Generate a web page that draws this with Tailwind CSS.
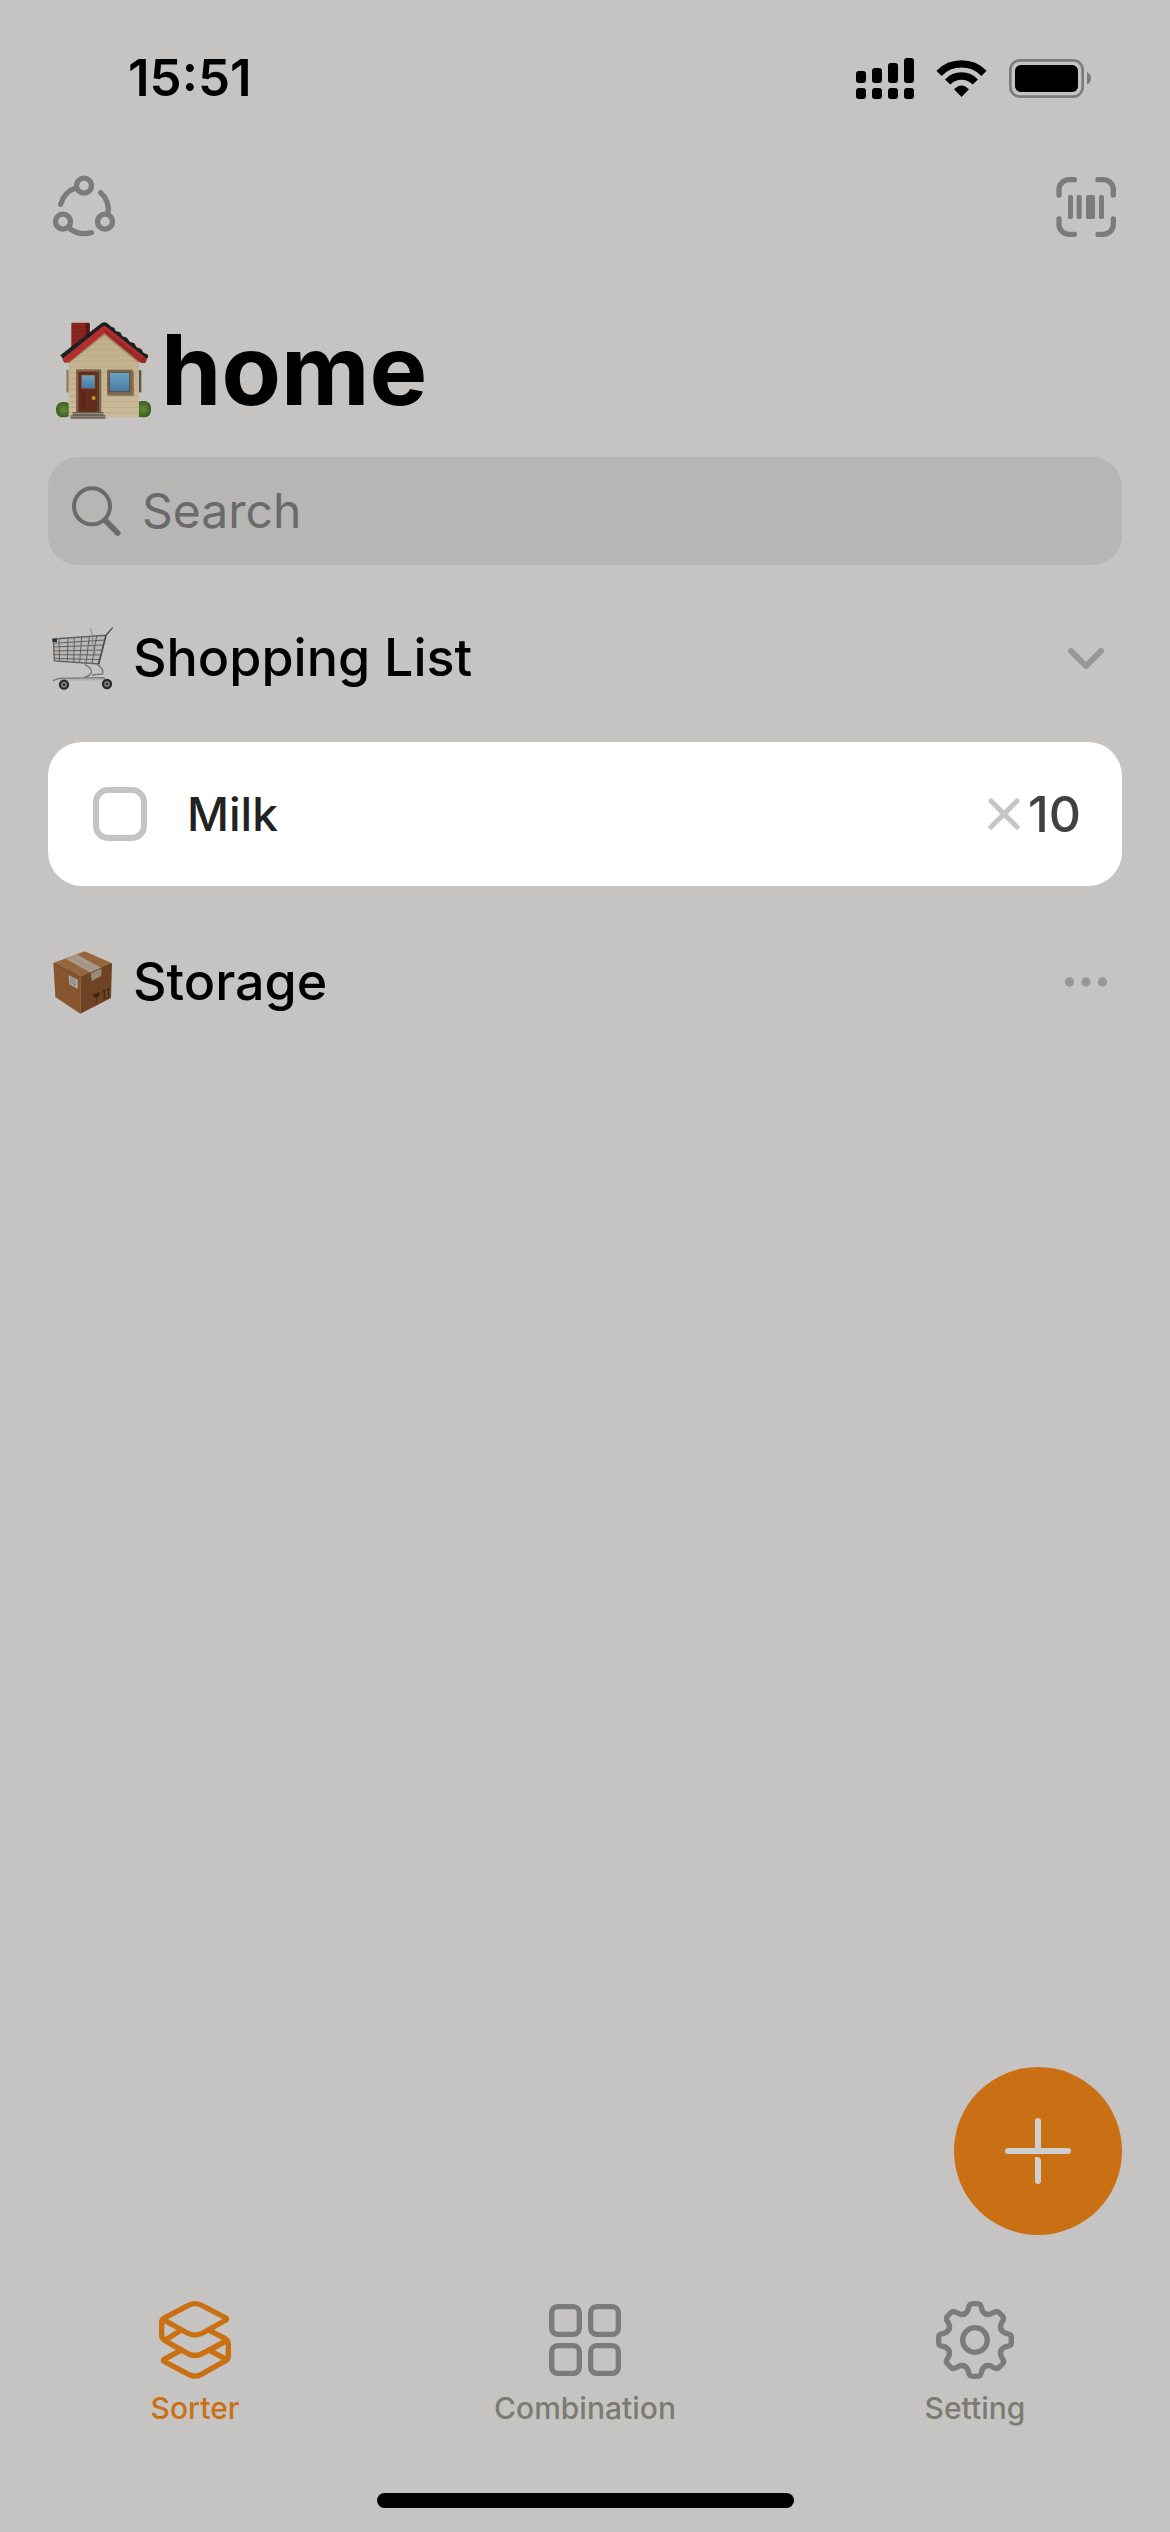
<!DOCTYPE html>
<html lang="en">
<head>
<meta charset="utf-8">
<meta name="viewport" content="width=device-width, initial-scale=1">
<title>home</title>
<script src="https://cdn.jsdelivr.net/npm/@tailwindcss/browser@4"></script>
</head>
<body class="flex min-h-screen flex-col bg-[#c5c4c2] font-['Inter',sans-serif] text-black">

  <!-- Status bar -->
  <div class="flex items-center justify-between pt-[46px] pr-[79px] pl-32">
    <span class="text-[51px] leading-[64px] font-semibold">15:51</span>
    <div class="flex items-center gap-[22px]">
      <svg class="h-[41px] w-[58px]" viewBox="48 51 174 123" aria-label="Signal">
        <rect x="48" y="90" width="30" height="36" rx="9"/><rect x="96" y="81" width="30" height="45" rx="9"/>
        <rect x="144" y="66" width="30" height="60" rx="9"/><rect x="192" y="51" width="30" height="75" rx="9"/>
        <rect x="48" y="141" width="30" height="33" rx="9"/><rect x="96" y="141" width="30" height="33" rx="9"/>
        <rect x="144" y="141" width="30" height="33" rx="9"/><rect x="192" y="141" width="30" height="33" rx="9"/>
      </svg>
      <svg class="h-[39px] w-[51px]" viewBox="288 54 153 117" aria-label="Wi-Fi">
        <path d="M297 97A95 95 0 0 1 432 97M323 123A57 57 0 0 1 406 123" fill="none" stroke="#000" stroke-width="22"/>
        <path d="M342 145Q364.500 122 387 145L364.500 168Z"/>
      </svg>
      <svg class="h-[39px] w-[82px]" viewBox="507 54 246 117" aria-label="Battery">
        <rect x="511" y="58" width="217" height="109" rx="29" fill="none" stroke="#7b7b79" stroke-width="8"/>
        <rect x="525" y="72" width="189" height="81" rx="17"/>
        <path d="M741 93Q753 99 753 112T741 131Z" fill="#7b7b79"/>
      </svg>
    </div>
  </div>

  <!-- Toolbar -->
  <header class="flex items-center justify-between pt-[65px] pr-[51px] pl-[52px]">
    <button type="button" aria-label="Share">
      <svg class="size-16" viewBox="36 45 192 192" fill="none" stroke="#7b7b79" stroke-width="16" stroke-linecap="round">
        <circle cx="132" cy="77" r="22.500"/><circle cx="69" cy="185" r="22.500"/><circle cx="195" cy="185" r="22.500"/>
        <path d="M62 133A72 72 0 0 1 109 83M182 98A72 72 0 0 1 204 162M88 205A76 76 0 0 0 154 218"/>
      </svg>
    </button>
    <button type="button" aria-label="Scan barcode">
      <svg class="size-16" viewBox="45 45 192 192" fill="none" stroke="#7b7b79" stroke-width="16" stroke-linecap="round">
        <path d="M57 105V89a30 30 0 0 1 30-30h16M174 59h16a30 30 0 0 1 30 30v16M57 177v16a30 30 0 0 0 30 30h16M174 223h16a30 30 0 0 0 30-30v-16"/>
        <g fill="#7b7b79" stroke="none"><rect x="84" y="105" width="15" height="72" rx="5"/><rect x="110" y="105" width="15" height="72" rx="5"/><rect x="138" y="105" width="27" height="72" rx="5"/><rect x="177" y="105" width="15" height="72" rx="5"/></g>
      </svg>
    </button>
  </header>

  <main class="flex flex-1 flex-col px-12">
    <h1 class="mt-[81px] flex items-center gap-[10px] pl-2 text-[97px] leading-[100px] font-bold">
      <svg class="h-[100px] w-[95px]" viewBox="49 60 285 300" aria-hidden="true">
        <defs>
          <linearGradient id="wall" x1="0" y1="0" x2="0" y2="1"><stop offset="0" stop-color="#c0ae8a"/><stop offset="1" stop-color="#cabb9a"/></linearGradient>
          <linearGradient id="pane" x1="0" y1="0" x2="0" y2="1"><stop offset="0" stop-color="#6fa3bf"/><stop offset="1" stop-color="#4679a6"/></linearGradient>
          <radialGradient id="bush"><stop offset="0" stop-color="#648c36"/><stop offset="1" stop-color="#3c5d1f"/></radialGradient>
        </defs>
        <path d="M95 71q0-3 4-3h47q4 0 4 4v45l-55 35Z" fill="#8c2622"/>
        <path d="M138 69h8q4 0 4 4v45l-12 8Z" fill="#5f1715"/>
        <path d="M96 82h42M96 95h42M96 108h42M96 121h42" stroke="#741d1b" stroke-width="2"/>
        <rect x="80" y="210" width="9" height="67" fill="#927c62"/><rect x="296" y="210" width="9" height="67" fill="#5f5446"/>
        <rect x="49" y="306" width="46" height="46" rx="20" fill="url(#bush)"/><rect x="287" y="303" width="47" height="49" rx="20" fill="url(#bush)"/>
        <path d="M87 352V178L194 96l104 82v174Z" fill="url(#wall)"/>
        <path d="M178 117h34M158 132h72M138 149h112M118 166h150M88 183h209M88 200h209M88 218h209M88 235h209M88 252h209M88 270h209M88 288h209M88 305h209M88 322h209M88 339h209" stroke="#b5a480" stroke-width="2"/>
        <path d="M88 190 194 106l103 84v-14L194 92 88 176Z" fill="#9b8966"/>
        <path d="M62 166 186 69q8-5 16 0l14 12 8 2 4 10 14 4 6 12 14 4 8 12 14 5 7 12 14 5 6 11 14 6v9l-8 5L194 84 70 176Z" fill="#1d2122"/>
        <path d="M68 177 187 81q7-6 14 0l121 96-5 12h-13L194 99 86 188H74Z" fill="#b42f2b"/>
        <path d="m194 99 110 90h13l5-12-10-8-4 6-114-89Z" fill="#8e2422" opacity=".65"/>
        <rect x="109" y="208" width="76" height="130" fill="#83664a"/><rect x="116" y="215" width="56" height="121" fill="#642c1c"/>
        <rect x="173" y="215" width="5" height="121" fill="#4b3525"/>
        <rect x="125" y="225" width="41" height="41" fill="url(#pane)" stroke="#8b4932" stroke-width="2"/>
        <path d="M125 276h14v50h-14z" fill="#592517"/><circle cx="162" cy="294" r="6" fill="#c09a32"/>
        <path d="M99 336h92v9h6v11H93v-10h6Z" fill="#6b6257"/><path d="M99 341h92M93 350h104" stroke="#958b7c" stroke-width="3"/>
        <path d="M205 215h78v73h-78Z" fill="#8f7f62"/>
        <rect x="202" y="209" width="77" height="75" fill="#80644a"/><rect x="210" y="217" width="60" height="58" fill="url(#pane)" stroke="#4b4238" stroke-width="2"/>
      </svg>
      <span>home</span>
    </h1>

    <label class="mt-[37px] flex h-27 items-center gap-5 rounded-[30px] bg-[#b7b6b4] pl-[23px]">
      <svg class="size-[51px] shrink-0" viewBox="93 105 153 153" fill="none" stroke="#6a6a6c" stroke-linecap="round" aria-hidden="true">
        <circle cx="156" cy="166" r="54" stroke-width="12"/><path d="m197 209 36 37" stroke-width="17"/>
      </svg>
      <input type="search" aria-label="Search" placeholder="Search" class="min-w-0 flex-1 bg-transparent text-[48px] outline-none placeholder:text-[#6a6a6c]">
    </label>

    <section>
      <div class="mt-[57px] flex h-[72px] items-center pl-[3px]">
        <svg class="h-[65px] w-16" viewBox="33 528 192 195" fill="none" stroke="#62605e" stroke-width="3" aria-hidden="true">
          <path d="M40 567 198 556 176 642 43 633Z" fill="#bab8b5" stroke-width="4"/>
          <path d="M40 580 195 570M40 591 192 585M41 603 188 600M42 614 185 615M42 625 181 629M57 566l2 68M84 564l-2 72M103 563l-2 74M125 562l-6 76M148 560l-10 79M170 558l-14 82" />
          <path d="m151 535 7 22-1 22 9 34" stroke="#8a8886"/>
          <path d="M36 566h15v10H38z" fill="#1d3444" stroke="none"/>
          <path d="m176 642 22-86 20-23" stroke="#494746" stroke-width="4"/>
          <path d="M134 643q24 12 20 25-7 12-22 14M172 644q20 12 16 28l-32 3M39 692l18-7 134-2 11 14" stroke="#777472" stroke-width="4"/>
          <path d="M58 690l140-1" stroke="#aaa7a5"/>
          <g fill="#898684" stroke="#2b2929" stroke-width="7"><circle cx="72" cy="704" r="12"/><circle cx="201" cy="702" r="12"/></g>
          <g fill="#2b2929" stroke="none"><circle cx="72" cy="704" r="4"/><circle cx="201" cy="702" r="4"/></g>
        </svg>
        <h2 class="ml-[18px] flex-1 text-[52px] leading-[64px] font-medium">Shopping List</h2>
        <button type="button" aria-label="Collapse shopping list" class="flex size-[72px] items-center justify-center">
          <svg class="h-[25px] w-10" viewBox="348 81 120 75" fill="none" stroke="#989795" stroke-width="18" stroke-linecap="round" stroke-linejoin="round"><path d="m363 96 45 45 45-45"/></svg>
        </button>
      </div>

      <div class="mt-12 flex h-36 items-center rounded-[34px] bg-white pr-[41px] pl-[45px]">
        <input id="milk" type="checkbox" class="size-[54px] appearance-none rounded-[15px] border-[6px] border-[#c4c4c4]">
        <label for="milk" class="ml-10 flex-1 text-[46px] leading-[64px] font-medium text-[#222]">Milk</label>
        <svg class="mr-2 size-8" viewBox="108 537 96 96" stroke="#c5c5c5" stroke-width="15" stroke-linecap="round" aria-label="times"><path d="m117 546 78 78M195 546l-78 78"/></svg>
        <span class="text-[50px] leading-[64px] font-medium text-[#414141]">10</span>
      </div>
    </section>

    <section class="mt-[60px] flex h-[72px] items-center pl-[3px]">
      <svg class="h-[65px] w-16" viewBox="33 660 192 195" aria-hidden="true">
        <path d="M40 699 134 664l82 36-95 42Z" fill="#95653d"/>
        <path d="M40 699 121 742V851L46 801Z" fill="#87552f"/>
        <path d="M121 742 216 700 213 804 121 851Z" fill="#6e4424"/>
        <path d="M76 686 111 673 185 714 153 729Z" fill="#a39483"/><path d="M153 729 185 714 183 738 155 753Z" fill="#988b7b"/>
        <path d="m84 684 71 42M104 677l74 40" stroke="#b2a492" stroke-width="3"/>
        <path d="m41 700 80 42 94-41" fill="none" stroke="#4f3019" stroke-width="2"/>
        <path d="m86 736 27 14v26l-25-13Z" fill="#a8aaac"/><path d="m90 744 17 9M90 751l10 5M91 757l15 8M104 754v14" stroke="#65696c" stroke-width="2"/>
        <path d="m158 794 22-9q0 14-10 18v12l7-2-15 7 6-5v-11q-9-1-10-10Z" fill="#3f2815"/>
        <path d="m193 781v25M205 775v25M189 788l4-9 4 5M201 783l4-9 4 5M189 809l20-9" fill="none" stroke="#3f2815" stroke-width="3"/>
      </svg>
      <h2 class="ml-[18px] flex-1 text-[52px] leading-[64px] font-medium">Storage</h2>
      <button type="button" aria-label="Storage options" class="flex size-[72px] items-center justify-center">
        <svg class="h-[10px] w-[46px]" viewBox="339 1071 138 30" fill="#989795"><circle cx="358.500" cy="1086" r="14"/><circle cx="408" cy="1086" r="14"/><circle cx="457.500" cy="1086" r="14"/></svg>
      </button>
    </section>

    <button type="button" aria-label="Add item" class="mt-auto mb-[65px] flex size-42 items-center justify-center self-end rounded-full bg-[#ca7014]">
      <svg class="size-[66px]" viewBox="195 204 198 198" fill="#cfcecf">
        <rect x="195" y="294" width="198" height="18" rx="9"/>
        <path d="M285 300v-87a9 9 0 0 1 18 0v87ZM285 321h6q12 0 12 12v60a9 9 0 0 1-18 0Z"/>
      </svg>
    </button>
  </main>

  <!-- Tab bar -->
  <nav class="grid grid-cols-3 text-[30px] leading-10 font-medium text-[#7b7b74]">
    <a href="#" aria-current="page" class="flex flex-col items-center gap-2 text-[#ca7014]">
      <svg class="size-20" viewBox="72 60 240 240" fill="none" stroke="#ca7014" stroke-width="16" stroke-linecap="round" stroke-linejoin="round">
        <path d="M98 115 172 76Q192 66 212 76L285 114Q289 117 285 120L215 159Q192 171 169 159L102 122M98 115Q92 119 92 128V166Q92 176 102 182L169 220Q192 233 215 220L288 181M103 180l47-29M235 151 283 176Q292 182 292 192V230Q292 237 284 242L211 283Q192 294 173 283L99 244Q95 241 99 238L150 211M288 181 235 211 288 239"/>
      </svg>
      Sorter
    </a>
    <a href="#" class="flex flex-col items-center gap-2">
      <svg class="size-20" viewBox="195 60 240 240" fill="none" stroke="#7b7b79" stroke-width="16">
        <rect x="215" y="80" width="83" height="83" rx="18"/><rect x="332" y="80" width="83" height="83" rx="18"/>
        <rect x="215" y="197" width="83" height="83" rx="18"/><rect x="332" y="197" width="83" height="83" rx="18"/>
      </svg>
      Combination
    </a>
    <a href="#" class="flex flex-col items-center gap-2">
      <svg class="size-20" viewBox="-120 -120 240 240" fill="none" stroke="#7b7b79" stroke-width="16" stroke-linecap="round">
        <circle r="37"/>
        <path id="tooth" d="M-32-78C-22-82-21-88-19-97Q-17-109-8-109H8Q17-109 19-97C21-88 22-82 32-78"/>
        <use href="#tooth" transform="rotate(45)"/><use href="#tooth" transform="rotate(90)"/><use href="#tooth" transform="rotate(135)"/><use href="#tooth" transform="rotate(180)"/><use href="#tooth" transform="rotate(225)"/><use href="#tooth" transform="rotate(270)"/><use href="#tooth" transform="rotate(315)"/>
      </svg>
      Setting
    </a>
  </nav>
  <div class="mt-[65px] mb-6 h-[15px] w-[417px] self-center rounded-full bg-black"></div>
</body>
</html>
